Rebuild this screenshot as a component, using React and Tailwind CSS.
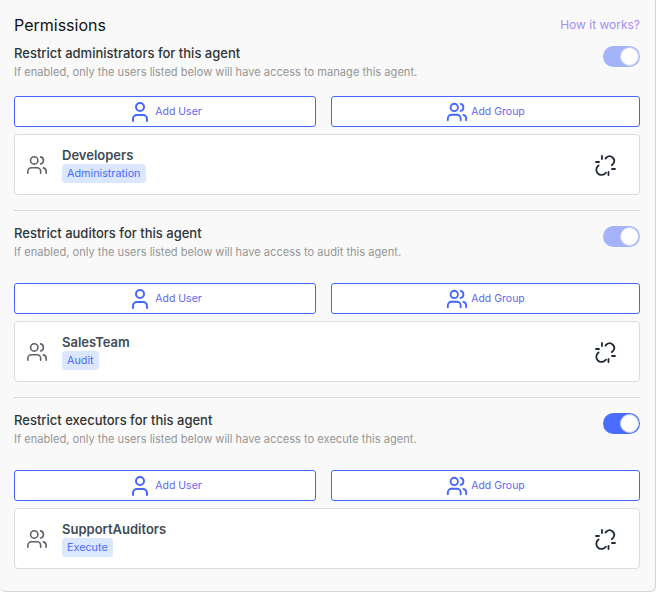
import { Users, User } from "lucide-react"

const sections = [
  { title: "Restrict administrators for this agent", verb: "manage", group: "Developers", tag: "Administration", on: false, gap: "mb-4" },
  { title: "Restrict auditors for this agent", verb: "audit", group: "SalesTeam", tag: "Audit", on: false, gap: "mb-[23px]" },
  { title: "Restrict executors for this agent", verb: "execute", group: "SupportAuditors", tag: "Execute", on: true, gap: "mb-[23px]" },
]

function UnlinkIcon() {
  return (
    <svg width="24" height="24" viewBox="0 0 24 24" fill="none" stroke="#1f2937" strokeWidth="1.8" strokeLinecap="round" strokeLinejoin="round">
      <path d="M12.5 5.5l1-1a4.6 4.6 0 0 1 6.8 6.1L18.8 12.2" />
      <path d="M5.6 12.4L5 13a5 5 0 0 0 7 7.6l1-1" />
      <path d="M9 3v3M3 9h3M15.5 19v3M19 16h3" />
    </svg>
  )
}

function AddButton({ icon: Icon, label, size }) {
  return (
    <button className="flex h-[31px] flex-1 items-center justify-center gap-[3px] rounded-[3px] border border-[#4466ff] bg-white text-[10.5px] text-[#6366f1]">
      <Icon size={size} strokeWidth={2} className="text-[#4466ff]" />
      {label}
    </button>
  )
}

function Section({ s, last }) {
  return (
    <div>
      <div className={"flex items-start justify-between " + s.gap}>
        <div>
          <p className="text-[13px] leading-[18px] font-medium text-[#2f3437]">{s.title}</p>
          <p className="mt-[2px] text-[11.1px] leading-[16px] text-[#969696]">
            If enabled, only the users listed below will have access to {s.verb} this agent.
          </p>
        </div>
        <div className={"mt-[2px] flex h-[21px] w-[37px] items-center justify-end rounded-full " + (s.on ? "bg-[#4a6cff]" : "bg-[#a5b4f8]")}>
          <div className="mr-[1px] h-[19px] w-[19px] rounded-full border border-[#c9d2fb] bg-white" />
        </div>
      </div>
      <div className="flex gap-[15px]">
        <div className="flex w-[302px]"><AddButton icon={User} label="Add User" size={24} /></div>
        <AddButton icon={Users} label="Add Group" size={22} />
      </div>
      <div className="mt-[7px] flex h-[61px] items-center rounded-[4px] border border-[#dcdcdc] bg-white pr-[22px] pl-[11px]">
        <Users size={22} strokeWidth={1.75} className="text-[#5f6368]" />
        <div className="ml-[14px] flex-1 pt-[1px]">
          <p className="text-[13px] leading-[16px] font-semibold text-[#414b55]">{s.group}</p>
          <span className="mt-[1px] block w-fit rounded-[4px] bg-[#dbe7ff] px-[5px] text-[10.8px] leading-[19px] text-[#4a6cff]">{s.tag}</span>
        </div>
        <UnlinkIcon />
      </div>
      {!last && <div className="mt-[15px] mb-[13px] h-px bg-[#dcdcdc]" />}
    </div>
  )
}

export default function App() {
  return (
    <div className="h-[592px] w-[656px] rounded-br-[6px] rounded-bl-[6px] border-r border-b border-[#d5d5d5] bg-[#f9f9f9] pt-[13px] pr-[15px] pl-[14px] font-['Inter',sans-serif]">
      <div className="mb-[7px] flex items-center justify-between">
        <h2 className="text-base leading-[24px] text-[#111]">Permissions</h2>
        <a className="text-xs text-[#a78bfa]">How it works?</a>
      </div>
      {sections.map((s, i) => (
        <Section key={s.group} s={s} last={i === sections.length - 1} />
      ))}
    </div>
  )
}
